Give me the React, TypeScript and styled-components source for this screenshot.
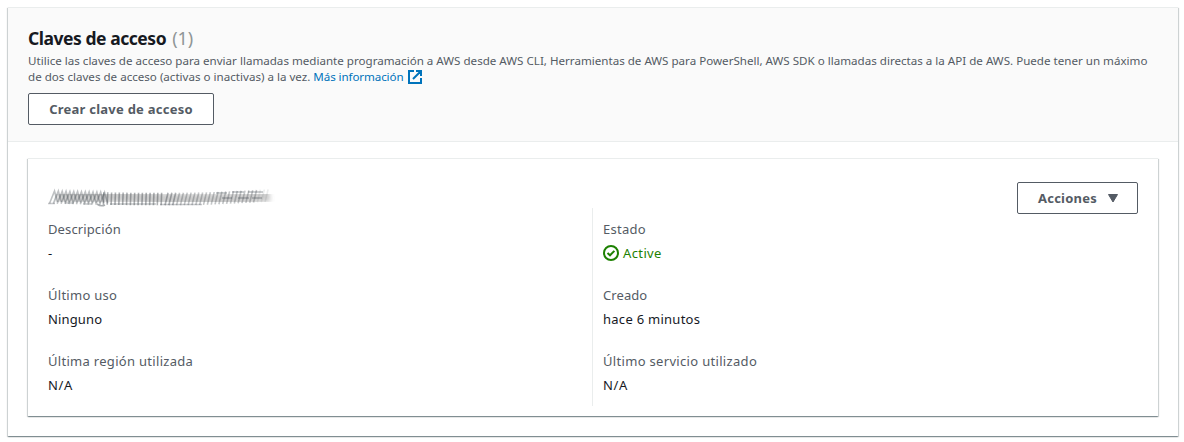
import React from "react";
import styled, { createGlobalStyle } from "styled-components";

const GlobalStyle = createGlobalStyle`
  * { box-sizing: border-box; }
  body {
    margin: 0;
    background: #fff;
    color: #16191f;
    font: 400 13px/22px "Noto Sans", sans-serif;
  }
`;

const Page = styled.main`
  height: 442px;
  padding: 7px 6px 6px 8px;
  overflow: hidden;
`;

const Container = styled.section`
  background: #fff;
  border-top: 1px solid #eaeded;
  box-shadow: 0 1px 1px 0 rgba(0, 28, 36, 0.3), 1px 1px 1px 0 rgba(0, 28, 36, 0.15),
    -1px 1px 1px 0 rgba(0, 28, 36, 0.15);
`;

const Panel = styled(Container)`
  width: 1170px;
  height: 429px;
`;

const PanelHeader = styled.header`
  height: 134px;
  padding: 19px 20px 0;
  background: #fafafa;
  border-bottom: 1px solid #eaeded;
`;

const Title = styled.h2`
  display: flex;
  gap: 6px;
  margin: 0 0 4px;
  font-size: 17.5px;
  line-height: 22px;
  font-weight: 700;
  white-space: nowrap;
`;

const Spaced = styled.span<{ $spacing: number }>`
  letter-spacing: ${(p) => p.$spacing}px;
`;

const Counter = styled.span`
  color: #8f9596;
  font-size: 18px;
  font-weight: 400;
`;

const Description = styled.p`
  margin: 0 0 8px;
  color: #545b64;
  font-size: 11.6px;
  line-height: 16px;
  white-space: nowrap;
`;

const DescriptionLine = styled.span`
  display: flex;
`;

const Link = styled.a`
  display: flex;
  align-items: center;
  gap: 5px;
  margin-left: 3px;
  color: #0073bb;
  letter-spacing: -0.1px;
`;

const Button = styled.button<{ $width: number }>`
  display: flex;
  align-items: center;
  justify-content: center;
  gap: 10px;
  flex: none;
  width: ${(p) => p.$width}px;
  height: 32px;
  padding: 0;
  border: 1px solid #545b64;
  border-radius: 2px;
  background: #fff;
  color: #545b64;
  font: 700 13px/22px "Noto Sans", sans-serif;
  letter-spacing: 0.24px;
`;

const ActionsButton = styled(Button)`
  padding-left: 2px;
`;

const Card = styled(Container)`
  height: 258px;
  margin: 16px 20px 0;
  padding: 23px 20px 0;
`;

const CardHeader = styled.div`
  display: flex;
  justify-content: space-between;
  align-items: flex-start;
  height: 26px;
`;

const Smudge = styled.svg`
  display: block;
  margin-top: 2px;
`;

const Columns = styled.div`
  display: grid;
  grid-template-columns: 544px 1fr;
`;

const Column = styled.dl<{ $divided?: boolean }>`
  display: flex;
  flex-direction: column;
  gap: 20px;
  margin: 0;
  padding: 10px 0 10px ${(p) => (p.$divided ? "10px" : "0")};
  border-left: ${(p) => (p.$divided ? "1px solid #eaeded" : "none")};
`;

const Field = styled.div`
  display: grid;
  gap: 2px;
`;

const Label = styled.dt`
  color: #545b64;
`;

const Value = styled.dd`
  margin: 0;
`;

const Status = styled.span`
  display: flex;
  align-items: center;
  gap: 4px;
  color: #1d8102;
`;

const ExternalIcon = () => (
  <svg width="14" height="14" viewBox="0 0 14 14" fill="none" stroke="#0073bb" strokeWidth="2">
    <path d="M6 1H1v12h12V8M8 1h5v5M13 1 5 9" />
  </svg>
);

const CheckIcon = () => (
  <svg width="16" height="16" viewBox="0 0 16 16" fill="none" stroke="#1d8102" strokeWidth="2">
    <circle cx="8" cy="8" r="7" />
    <path d="m4.5 8 2.5 2.3 4.4-4.4" />
  </svg>
);

const CaretIcon = () => (
  <svg width="12" height="9" viewBox="0 0 12 9">
    <path d="M1.5.5h9L6 8z" fill="#545b64" stroke="#545b64" strokeLinejoin="round" />
  </svg>
);

const strokes = Array.from({ length: 57 }, (_, i) => {
  const x = 1.5 + i * 3.85;
  const slant = i < 14 ? 5 : i < 30 ? 0.5 : 3;
  const sag = Math.sin((i / 56) * Math.PI) * 1.8 - (i > 40 ? (i - 40) * 0.1 : 0);
  const fade = i > 53 ? 0.1 : i > 32 ? 0.32 : i < 14 ? 0.34 : 0.44;
  return { x, slant, sag, fade };
});

const SmudgedKey = () => (
  <Smudge width="232" height="26" viewBox="0 0 232 26" fill="none">
    <defs>
      <filter id="soft" x="-5%" y="-30%" width="110%" height="160%">
        <feGaussianBlur stdDeviation="0.7" />
      </filter>
      <filter id="haze" x="-5%" y="-50%" width="110%" height="200%">
        <feGaussianBlur stdDeviation="1.9" />
      </filter>
    </defs>
    <path d="M9 12.5Q60 11.5 110 14.5T222 12" stroke="#888" strokeOpacity=".42" strokeWidth="11" filter="url(#haze)" />
    <g filter="url(#soft)" stroke="#444b52" strokeWidth="1.6">
      {strokes.map(({ x, slant, sag, fade }, i) => (
        <path
          key={i}
          d={`M${x} ${19.5 + sag}L${x + slant} ${7 + sag}${i < 14 ? `L${x + slant + 3} ${18 + sag}` : ""}`}
          strokeOpacity={fade}
        />
      ))}
      <path d="M0 19.5h7M17 19h9M35 20h9M62 20h46M112 20.5h42" strokeOpacity=".3" />
      <path d="M168 9h11M184 8h12M200 8h15M174 14h10M190 14h11M204 14h10" strokeOpacity=".36" />
      <path d="M49 20q4 3 8 1" strokeOpacity=".45" />
    </g>
  </Smudge>
);

const Text = ({ children, spacing = 0.27 }: { children: string; spacing?: number }) => (
  <Spaced $spacing={spacing}>{children}</Spaced>
);

export default function App() {
  return (
    <>
      <GlobalStyle />
      <Page>
        <Panel>
          <PanelHeader>
            <Title>
              <Text spacing={-0.46}>Claves de acceso</Text>
              <Counter>(1)</Counter>
            </Title>
            <Description>
              <DescriptionLine>
                Utilice las claves de acceso para enviar llamadas mediante programación a AWS desde AWS CLI, Herramientas de AWS
                para PowerShell, AWS SDK o llamadas directas a la API de AWS. Puede tener un máximo
              </DescriptionLine>
              <DescriptionLine>
                de dos claves de acceso (activas o inactivas) a la vez.
                <Link>
                  Más información
                  <ExternalIcon />
                </Link>
              </DescriptionLine>
            </Description>
            <Button $width={186}>Crear clave de acceso</Button>
          </PanelHeader>
          <Card>
            <CardHeader>
              <SmudgedKey />
              <ActionsButton $width={121}>
                Acciones
                <CaretIcon />
              </ActionsButton>
            </CardHeader>
            <Columns>
              <Column>
                <Field>
                  <Label><Text spacing={0.12}>Descripción</Text></Label>
                  <Value>-</Value>
                </Field>
                <Field>
                  <Label><Text>Último uso</Text></Label>
                  <Value><Text spacing={0.14}>Ninguno</Text></Value>
                </Field>
                <Field>
                  <Label><Text spacing={0.3}>Última región utilizada</Text></Label>
                  <Value><Text spacing={0.6}>N/A</Text></Value>
                </Field>
              </Column>
              <Column $divided>
                <Field>
                  <Label><Text>Estado</Text></Label>
                  <Value>
                    <Status>
                      <CheckIcon />
                      <Text spacing={0.38}>Active</Text>
                    </Status>
                  </Value>
                </Field>
                <Field>
                  <Label><Text spacing={0.08}>Creado</Text></Label>
                  <Value><Text>hace 6 minutos</Text></Value>
                </Field>
                <Field>
                  <Label><Text spacing={0.32}>Último servicio utilizado</Text></Label>
                  <Value><Text spacing={0.6}>N/A</Text></Value>
                </Field>
              </Column>
            </Columns>
          </Card>
        </Panel>
      </Page>
    </>
  );
}
